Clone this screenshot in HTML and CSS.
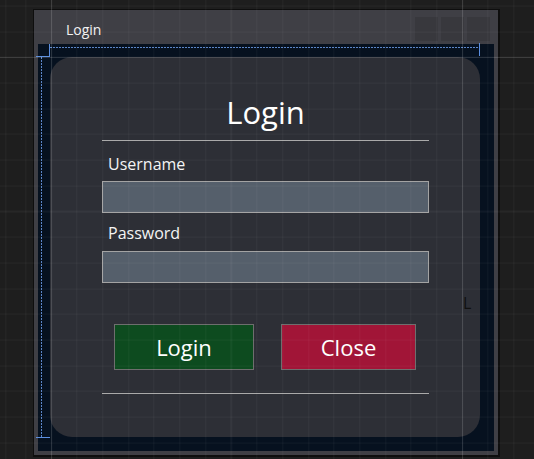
FILE: index.html
```html
<!DOCTYPE html>
<html>
<head>
<meta charset="utf-8">
<link rel="stylesheet" href="styles.css">
</head>
<body>
<div class="designer">
  <div class="window">
    <div class="titlebar">
      <span class="title">Login</span>
      <div class="caption-buttons"><span class="cap-btn"></span><span class="cap-btn"></span><span class="cap-btn"></span></div>
    </div>
    <div class="client">
      <div class="card">
        <div class="heading">Login</div>
        <div class="rule"></div>
        <div class="label label-first">Username</div>
        <div class="input"></div>
        <div class="label">Password</div>
        <div class="input"></div>
        <div class="buttons">
          <div class="btn btn-login">Login</div>
          <div class="btn btn-close">Close</div>
        </div>
        <div class="rule rule-bottom"></div>
        <span class="stray">L</span>
      </div>
      <div class="adorner dash-h"></div>
      <div class="adorner dash-v"></div>
      <div class="adorner br-tl-v"></div>
      <div class="adorner br-tl-h"></div>
      <div class="adorner br-tr-v"></div>
      <div class="adorner br-bl-h"></div>
    </div>
  </div>
  <div class="grid"></div>
</div>
</body>
</html>
```
FILE: styles.css
```css
html, body {
  margin: 0;
  padding: 0;
}
body {
  width: 534px;
  height: 459px;
  overflow: hidden;
  background: #1e1e1e;
  font-family: "Open Sans", "Noto Sans", sans-serif;
  color: #ffffff;
}
.designer {
  position: relative;
  width: 534px;
  height: 459px;
  padding: 9px 0 0 33px;
  box-sizing: border-box;
}
.window {
  width: 467px;
  height: 448px;
  box-sizing: border-box;
  border-style: solid;
  border-color: #0e0e0e;
  border-width: 1px 2px 2px 1px;
  background: #3f3f45;
  display: flex;
  flex-direction: column;
}
.titlebar {
  height: 34px;
  flex: none;
  display: flex;
  align-items: flex-start;
  justify-content: space-between;
  padding: 0 8px 0 32px;
  box-sizing: border-box;
}
.title {
  font-size: 14px;
  line-height: 18px;
  margin-top: 11px;
  color: #f2f2f2;
}
.caption-buttons {
  display: flex;
  gap: 3px;
  margin-top: 7px;
}
.cap-btn {
  width: 23px;
  height: 24px;
  background: #38383d;
}
.client {
  position: relative;
  flex: 1;
  margin: 0 4px 4px 4px;
  background: #06111f;
  display: flex;
  padding: 13px 14px 14px 12px;
}
.card {
  position: relative;
  flex: 1;
  background: #2d2f36;
  border-radius: 22px;
  padding: 0 51px 0 52px;
  display: flex;
  flex-direction: column;
}
.heading {
  margin-top: 35px;
  height: 40px;
  line-height: 40px;
  font-size: 31px;
  text-align: center;
}
.rule {
  height: 1px;
  margin-top: 8px;
  background: #aaaaaa;
}
.rule-bottom {
  margin-top: 23px;
}
.label {
  height: 20px;
  line-height: 20px;
  font-size: 16px;
  padding-left: 6px;
  margin-top: 10px;
  color: #f4f4f4;
}
.label-first {
  margin-top: 13px;
}
.input {
  height: 32px;
  box-sizing: border-box;
  margin-top: 8px;
  border: 1px solid #a3a3a3;
  background: #555f6b;
}
.label-first + .input {
  margin-top: 7px;
}
.buttons {
  display: flex;
  gap: 27px;
  padding-left: 12px;
  margin-top: 41px;
}
.btn {
  height: 46px;
  box-sizing: border-box;
  border: 1px solid #6e6e6e;
  display: flex;
  align-items: center;
  justify-content: center;
  font-size: 22px;
  line-height: 28px;
  padding-bottom: 1px;
}
.btn-login {
  width: 140px;
  background: #0d4b1f;
}
.btn-close {
  width: 135px;
  background: #a11537;
}
.stray {
  position: absolute;
  left: 413px;
  top: 236px;
  font-size: 16px;
  line-height: 20px;
  color: #111111;
}
.adorner {
  position: absolute;
}
.dash-h {
  left: 12px;
  top: 3px;
  width: 429px;
  height: 1px;
  background: repeating-linear-gradient(90deg, #5b86c9 0 2px, transparent 2px 3px);
}
.dash-v {
  left: 3px;
  top: 13px;
  width: 1px;
  height: 380px;
  background: repeating-linear-gradient(180deg, #5b86c9 0 2px, transparent 2px 3px);
}
.br-tl-v {
  left: 11px;
  top: 0;
  width: 1px;
  height: 13px;
  background: #5c8fe0;
}
.br-tl-h {
  left: -2px;
  top: 12px;
  width: 14px;
  height: 1px;
  background: #5c8fe0;
}
.br-tr-v {
  left: 441px;
  top: -1px;
  width: 1px;
  height: 13px;
  background: #5c8fe0;
}
.br-bl-h {
  left: -2px;
  top: 393px;
  width: 14px;
  height: 1px;
  background: #5c8fe0;
}
.grid {
  position: absolute;
  inset: 0;
  pointer-events: none;
  background-image:
    linear-gradient(90deg, transparent 51px, rgba(255,255,255,0.12) 51px 52px, transparent 52px 462px, rgba(255,255,255,0.12) 462px 463px, transparent 463px),
    linear-gradient(180deg, transparent 57px, rgba(255,255,255,0.12) 57px 58px, transparent 58px),
    repeating-linear-gradient(90deg, rgba(255,255,255,0.04) 0 1px, transparent 1px 25.6875px),
    repeating-linear-gradient(180deg, rgba(255,255,255,0.04) 0 1px, transparent 1px 25.6875px);
  background-size: 534px 459px, 534px 459px, 534px 459px, 534px 459px;
  background-position: 0 0, 0 0, 25.3px 0, 0 5.6px;
  background-repeat: no-repeat, no-repeat, repeat, repeat;
}
```
